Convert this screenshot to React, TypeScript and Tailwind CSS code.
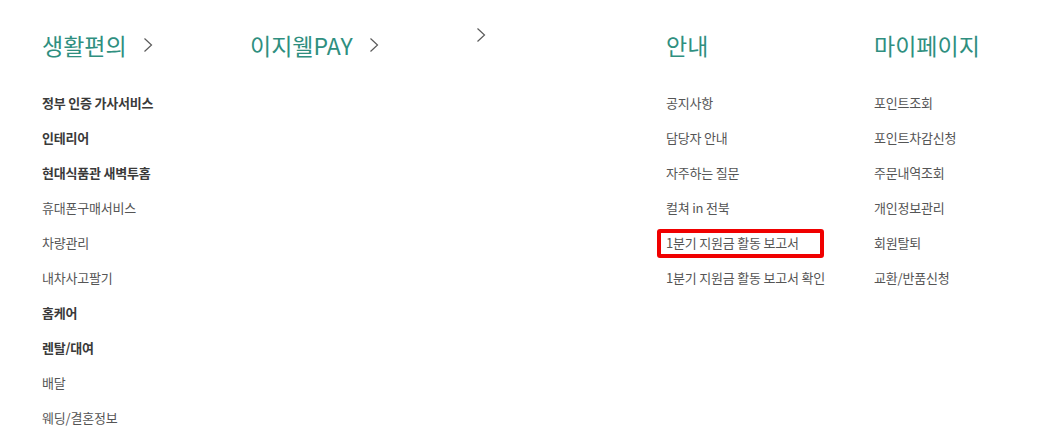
import React from "react";

type Item = { label: string; bold?: boolean; marked?: boolean };
type Column = { title: string; chevron?: boolean; items: Item[] };

const columns: Column[] = [
  {
    title: "생활편의",
    chevron: true,
    items: [
      { label: "정부 인증 가사서비스", bold: true },
      { label: "인테리어", bold: true },
      { label: "현대식품관 새벽투홈", bold: true },
      { label: "휴대폰구매서비스" },
      { label: "차량관리" },
      { label: "내차사고팔기" },
      { label: "홈케어", bold: true },
      { label: "렌탈/대여", bold: true },
      { label: "배달" },
      { label: "웨딩/결혼정보" },
    ],
  },
  { title: "이지웰PAY", chevron: true, items: [] },
  { title: "", chevron: true, items: [] },
  {
    title: "안내",
    items: [
      { label: "공지사항" },
      { label: "담당자 안내" },
      { label: "자주하는 질문" },
      { label: "컬쳐 in 전북" },
      { label: "1분기 지원금 활동 보고서", marked: true },
      { label: "1분기 지원금 활동 보고서 확인" },
    ],
  },
  {
    title: "마이페이지",
    items: [
      { label: "포인트조회" },
      { label: "포인트차감신청" },
      { label: "주문내역조회" },
      { label: "개인정보관리" },
      { label: "회원탈퇴" },
      { label: "교환/반품신청" },
    ],
  },
];

function Chevron() {
  return (
    <svg width="10" height="16" viewBox="0 0 10 16" className="shrink-0">
      <polyline points="1.5,1.5 8.5,8 1.5,14.5" fill="none" stroke="#5a5a5a" strokeWidth="1.2" />
    </svg>
  );
}

export default function App() {
  return (
    <div
      className="w-[1059px] h-[429px] overflow-hidden bg-white pl-[42px] pt-[30px]"
      style={{ fontFamily: '"Noto Sans CJK KR", "Noto Sans", sans-serif' }}
    >
      <div className="flex">
        {columns.map((col, i) => (
          <div key={i} className="w-[208px] shrink-0">
            <div className={col.title ? "flex h-[30px] items-center" : "flex h-[30px] items-start -mt-[3px]"}>
              {col.title && (
                <span className="text-[23px] leading-[30px] text-[#2f8f80]">{col.title}</span>
              )}
              {col.chevron && (
                <span className={col.title ? "ml-[16px]" : "ml-[18px]"}>
                  <Chevron />
                </span>
              )}
            </div>
            <ul className="mt-[25.5px]">
              {col.items.map((item) => (
                <li key={item.label} className="relative h-[35px] flex items-center">
                  <span
                    className={
                      item.bold
                        ? "text-[13px] tracking-[-0.2px] font-bold text-[#3a3a3a]"
                        : "text-[13px] tracking-[-0.2px] text-[#555]"
                    }
                  >
                    {item.label}
                  </span>
                  {item.marked && (
                    <span className="absolute -left-[9px] top-[3.5px] w-[167px] h-[29px] border-4 border-[#f00000] rounded-[3px]" />
                  )}
                </li>
              ))}
            </ul>
          </div>
        ))}
      </div>
    </div>
  );
}
